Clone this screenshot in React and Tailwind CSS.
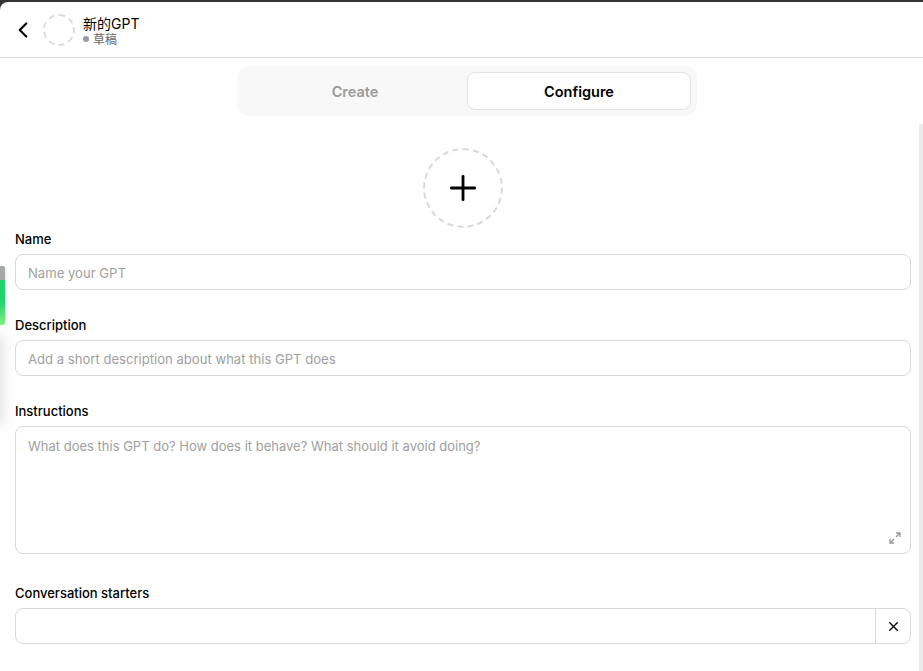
import { ChevronLeft, Plus, X } from 'lucide-react';

const font = { fontFamily: 'Inter, "Noto Sans CJK SC", sans-serif' };

function Field({ label, placeholder, className = '' }) {
  return (
    <div className={className}>
      <label className="block h-[20px] text-[13px] leading-[20px] font-medium text-black">{label}</label>
      <input
        placeholder={placeholder}
        className="mt-[5px] block h-[36px] w-full rounded-[8px] border border-[#d9d9d9] px-3 pt-[2px] text-[13.1px] outline-none placeholder:text-[#a0a0a0]"
      />
    </div>
  );
}

export default function App() {
  return (
    <div style={font} className="relative flex h-[671px] flex-col overflow-hidden bg-[#333333] pt-[2px]">
      <div className="flex min-h-0 flex-1 flex-col rounded-tl-[8px] bg-white">
        {/* Header */}
        <header className="flex h-[56px] items-center border-b border-[#dcdcdc] pl-[10px]">
          <ChevronLeft size={26} strokeWidth={2} className="text-black" />
          <div className="ml-[7px] h-[32px] w-[32px] rounded-full border-2 border-dashed border-[#dcdcdc]" />
          <div className="ml-[8px] pt-[2px]">
            <div className="text-[14px] leading-[17px] text-black">新的GPT</div>
            <div className="flex items-center text-[12px] leading-[15px] text-[#666666]">
              <span className="mr-[4px] h-[6px] w-[6px] rounded-full bg-[#9b9b9b]" />
              草稿
            </div>
          </div>
        </header>

        {/* Tabs */}
        <div className="flex h-[66px] justify-center pl-[11px] pt-[8px]">
          <div className="flex h-[50px] w-[460px] items-center rounded-[12px] bg-[#f8f8f8] pl-[6px] pr-[6px]">
            <button className="h-[38px] flex-1 pt-[1px] text-[14.5px] font-semibold text-[#9b9b9b]">Create</button>
            <button className="h-[38px] w-[224px] rounded-[8px] border border-[#e3e3e3] bg-white pt-[1px] text-[14.5px] font-semibold text-black">
              Configure
            </button>
          </div>
        </div>

        {/* Form */}
        <div className="flex min-h-0 flex-1">
          <main className="min-w-0 flex-1 overflow-hidden pl-[15px] pr-[8px]">
            <div className="mt-[24px] flex justify-center">
              <div className="flex h-[80px] w-[80px] items-center justify-center rounded-full border-2 border-dashed border-[#d9d9d9]">
                <Plus size={40} strokeWidth={1.7} className="text-black" />
              </div>
            </div>
            <Field label="Name" placeholder="Name your GPT" className="mt-[1px]" />
            <Field label="Description" placeholder="Add a short description about what this GPT does" className="mt-[25px]" />
            <div className="mt-[25px]">
              <label className="block h-[20px] text-[13px] leading-[20px] font-medium text-black">Instructions</label>
              <div className="relative mt-[5px]">
                <textarea
                  placeholder="What does this GPT do? How does it behave? What should it avoid doing?"
                  className="block h-[128px] w-full resize-none rounded-[8px] border border-[#d9d9d9] px-3 py-[9px] text-[13px] leading-[20px] outline-none placeholder:text-[#a0a0a0]"
                />
                <svg viewBox="0 0 12 12" className="absolute bottom-[10px] right-[10px] h-[12px] w-[12px] text-[#999999]" fill="none" stroke="currentColor" strokeWidth="1.3">
                  <path d="M7 1h4v4M11 1 7 5M1 7v4h4M1 11l4-4" />
                </svg>
              </div>
            </div>
            <div className="mt-[29px]">
              <label className="block h-[20px] text-[13px] leading-[20px] font-medium text-black">Conversation starters</label>
              <div className="mt-[5px] flex h-[36px] rounded-[8px] border border-[#d9d9d9]">
                <input className="min-w-0 flex-1 bg-transparent px-3 text-[13px] outline-none" />
                <button className="flex w-[35px] items-center justify-center border-l border-[#d9d9d9]">
                  <X size={15} strokeWidth={2.2} className="text-black" />
                </button>
              </div>
            </div>
          </main>
          <div className="w-[4px] rounded-tl-[3px] bg-[#ebebeb]" />
        </div>
      </div>

      {/* Soft shadow from the side widget */}
      <div className="absolute left-[-8px] top-[335px] h-[90px] w-[12px] bg-[#bdbdbd] opacity-40 blur-[6px]" />

      {/* Side handle over the page edge */}
      <div className="absolute left-0 top-[266px] h-[59px] w-[5px] overflow-hidden rounded-r-[3px] bg-[linear-gradient(to_bottom,#22d36f,#22d36f_60%,#7df27f)] shadow-[0_0_4px_rgba(0,0,0,0.15)]">
        <div className="h-[14px] bg-[#a8a8a8]" />
      </div>
    </div>
  );
}
